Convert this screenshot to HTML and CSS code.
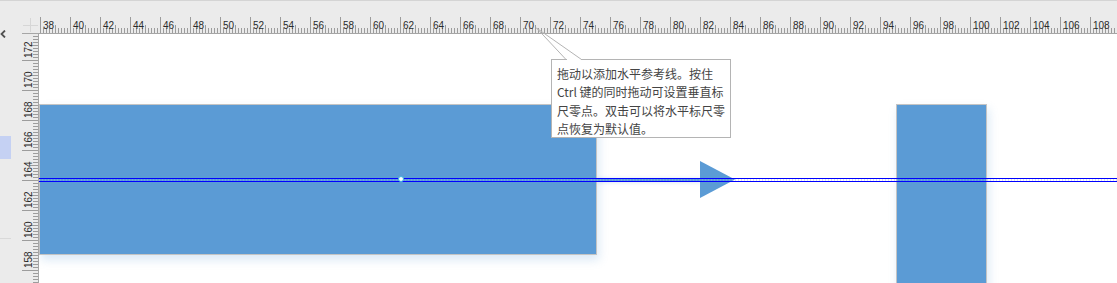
FILE: index.html
```html
<!DOCTYPE html>
<html lang="zh-CN">
<head>
    <meta charset="UTF-8">
    <title>标尺与参考线</title>
    <link rel="stylesheet" href="styles.css">
</head>
<body>
<div class="app">

    <!-- Panel lateral -->
    <aside class="side">
        <svg class="collapse" width="8" height="8" viewBox="0 0 8 8">
            <polyline points="5,0.5 1.5,4 5,7.5" fill="none" stroke="#505050" stroke-width="1.8"/>
        </svg>
        <div class="side-item"></div>
        <div class="side-sep"></div>
    </aside>

    <div class="work">
        <div class="strip"></div>

        <!-- Regla horizontal -->
        <div class="hrow">
            <div class="corner">
                <svg width="16" height="16" viewBox="0 0 16 16">
                    <line x1="8.5" y1="1" x2="8.5" y2="15" stroke="#d6d6d6"/>
                    <line x1="1" y1="8.5" x2="16" y2="8.5" stroke="#d6d6d6"/>
                </svg>
            </div>
            <div class="hruler">
                <span>38</span><span>40</span><span>42</span><span>44</span><span>46</span><span>48</span>
                <span>50</span><span>52</span><span>54</span><span>56</span><span>58</span><span>60</span>
                <span>62</span><span>64</span><span>66</span><span>68</span><span>70</span><span>72</span>
                <span>74</span><span>76</span><span>78</span><span>80</span><span>82</span><span>84</span>
                <span>86</span><span>88</span><span>90</span><span>92</span><span>94</span><span>96</span>
                <span>98</span><span>100</span><span>102</span><span>104</span><span>106</span><span>108</span>
            </div>
        </div>

        <div class="brow">
            <!-- Regla vertical -->
            <div class="vruler">
                <span class="first">172</span>
                <span>170</span><span>168</span><span>166</span><span>164</span>
                <span>162</span><span>160</span><span>158</span>
            </div>

            <!-- Lienzo -->
            <div class="canvas">
                <div class="shape rect-a"></div>
                <div class="shape rect-b"></div>
                <div class="connector"></div>
                <svg class="arrow" width="36" height="38" viewBox="0 0 36 38">
                    <polygon points="0,0 35,18.5 0,37" fill="#5b9bd5"/>
                </svg>
                <div class="guide"></div>
                <div class="guide-dot"></div>
                <div class="tip">
                    拖动以添加水平参考线。按住<br>
                    Ctrl 键的同时拖动可设置垂直标<br>
                    尺零点。双击可以将水平标尺零<br>
                    点恢复为默认值。
                </div>
            </div>
        </div>
    </div>

    <!-- Línea del globo de ayuda -->
    <svg class="callout" width="1117" height="283" viewBox="0 0 1117 283">
        <line x1="567" y1="59.5" x2="581" y2="59.5" stroke="#fff" stroke-width="1.2"/>
        <polyline points="566,59.5 536.5,28 581.5,59.5" fill="none" stroke="#b4b4b4" stroke-width="1"/>
    </svg>
</div>
</body>
</html>
```

FILE: styles.css
```css
body {
    margin: 0;
    width: 1117px;
    height: 283px;
    overflow: hidden;
    background: #ebebeb;
    font-family: "Liberation Sans", Arial, sans-serif;
}

.app {
    position: relative;
    display: flex;
    height: 282px;
    border-top: 1px solid #d4d4d4;
    background: #ebebeb;
}

/* Panel lateral */
.side {
    width: 22px;
    flex: none;
    display: flex;
    flex-direction: column;
    padding-top: 29px;
    box-sizing: border-box;
}

.collapse {
    display: block;
}

.side-item {
    width: 11px;
    height: 23px;
    margin-top: 98px;
    background: #c5d1f3;
}

.side-sep {
    width: 11px;
    height: 1px;
    margin-top: 79px;
    background: #d9d9d9;
}

.work {
    flex: 1;
    display: flex;
    flex-direction: column;
    min-width: 0;
}

.strip {
    height: 16px;
    flex: none;
}

/* Regla horizontal */
.hrow {
    display: flex;
    height: 16px;
    flex: none;
    border-bottom: 1px solid #a6a6a6;
}

.corner {
    width: 16px;
    flex: none;
    border-right: 1px solid #ebebeb;
}

.corner svg {
    display: block;
}

.hruler {
    flex: 1;
    display: flex;
    overflow: hidden;
    padding-left: 1px;
    background-image:
        linear-gradient(to right, #9c9c9c 1px, transparent 1px),
        linear-gradient(to right, #9c9c9c 1px, transparent 1px),
        linear-gradient(to right, #9c9c9c 1px, transparent 1px);
    background-size: 30px 16px, 15px 8px, 3px 5px;
    background-position: 1px 100%, 1px 100%, 1px 100%;
    background-repeat: repeat-x;
}

.hruler span {
    flex: none;
    width: 30px;
    box-sizing: border-box;
    padding: 4px 0 0 3px;
    font-size: 10px;
    line-height: 10px;
    color: #2a2a2a;
}

.brow {
    flex: 1;
    display: flex;
    min-height: 0;
}

/* Regla vertical */
.vruler {
    width: 16px;
    flex: none;
    display: flex;
    flex-direction: column;
    overflow: hidden;
    border-right: 1px solid #a6a6a6;
    background-image:
        linear-gradient(to bottom, #9c9c9c 1px, transparent 1px),
        linear-gradient(to bottom, #9c9c9c 1px, transparent 1px),
        linear-gradient(to bottom, #9c9c9c 1px, transparent 1px);
    background-size: 16px 30px, 8px 15px, 5px 3px;
    background-position: 100% 26px, 100% 11px, 100% 2px;
    background-repeat: repeat-y;
}

.vruler span {
    flex: none;
    height: 30px;
    box-sizing: border-box;
    writing-mode: vertical-rl;
    transform: rotate(180deg);
    padding-top: 2px;
    padding-right: 2px;
    font-size: 10px;
    line-height: 10px;
    color: #2a2a2a;
}

.vruler span.first {
    height: 26px;
}

/* Lienzo */
.canvas {
    flex: 1;
    position: relative;
    overflow: hidden;
    background: #fff;
}

.shape {
    position: absolute;
    box-sizing: border-box;
    background: #5b9bd5;
    border: 1px solid #c4c4c4;
    box-shadow: 2px 5px 9px rgba(91, 155, 213, 0.22);
}

.rect-a {
    left: 0;
    top: 70px;
    width: 558px;
    height: 151px;
}

.rect-b {
    left: 857px;
    top: 70px;
    width: 91px;
    height: 200px;
}

.connector {
    position: absolute;
    left: 557px;
    top: 144px;
    width: 106px;
    height: 3px;
    background: #5b9bd5;
    box-shadow: 0 1px 4px rgba(91, 155, 213, 0.35);
}

.arrow {
    position: absolute;
    left: 661px;
    top: 127px;
    display: block;
}

.guide {
    position: absolute;
    left: 0;
    right: 0;
    top: 144px;
    height: 2px;
    border-top: 1px solid #0000ff;
    border-bottom: 1px solid #0000ff;
    background: repeating-linear-gradient(to right, rgba(150, 170, 230, 0.35) 0 1px, transparent 1px 3px);
}

.guide-dot {
    position: absolute;
    left: 359px;
    top: 142px;
    width: 4px;
    height: 4px;
    border-radius: 50%;
    background: #fff;
    border: 1.5px solid #3fb6e2;
}

/* Globo de ayuda */
.tip {
    position: absolute;
    left: 512px;
    top: 25px;
    width: 180px;
    height: 79px;
    box-sizing: border-box;
    padding: 5px 0 0 5px;
    background: #fff;
    border: 1px solid #b4b4b4;
    font-family: "Noto Sans CJK SC", "Liberation Sans", sans-serif;
    font-size: 12px;
    line-height: 18.3px;
    color: #444;
    white-space: nowrap;
}

.callout {
    position: absolute;
    left: 0;
    top: -1px;
    pointer-events: none;
}
```
